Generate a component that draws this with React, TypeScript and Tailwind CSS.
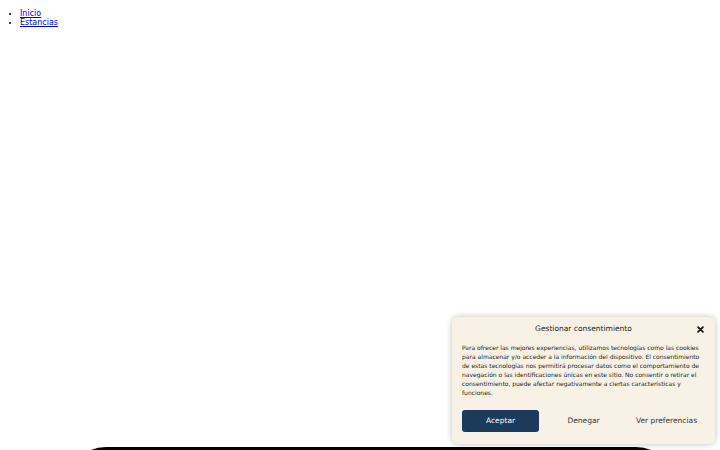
import React from "react";

export default function App() {
  return (
    <div className="relative w-[720px] h-[450px] overflow-hidden bg-white" style={{ fontFamily: '"DejaVu Sans", sans-serif' }}>
      <ul className="list-disc pl-[20px] mt-[9px] text-[8px] leading-[9.3px]">
        <li><a href="#" className="text-[#0000ee] underline">Inicio</a></li>
        <li><a href="#" className="text-[#0000ee] underline">Estancias</a></li>
      </ul>
      <div className="mt-[419px] ml-[66px] w-[610px] h-[40px] bg-black rounded-t-[40px]" />

      <div className="absolute left-[452px] top-[317px] w-[263px] h-[127px] bg-[#f8f2e6] rounded-[6px] shadow-[0_0_6px_rgba(0,0,0,0.25)] px-[10px] pt-[6px] text-[#222]">
        <div className="relative h-[12px] flex items-center justify-center">
          <span className="text-[7.5px] leading-[12px]">Gestionar consentimiento</span>
          <svg className="absolute right-[1px] top-[3px]" width="7" height="7" viewBox="0 0 10 10">
            <path d="M1.5 1.5 L8.5 8.5 M8.5 1.5 L1.5 8.5" stroke="#111" strokeWidth="2.4" strokeLinecap="round" />
          </svg>
        </div>
        <p className="mt-[7.5px] text-[6px] leading-[9px]">
          Para ofrecer las mejores experiencias, utilizamos tecnologías como las cookies para almacenar y/o acceder a la información del dispositivo. El consentimiento de estas tecnologías nos permitirá procesar datos como el comportamiento de navegación o las identificaciones únicas en este sitio. No consentir o retirar el consentimiento, puede afectar negativamente a ciertas características y funciones.
        </p>
        <div className="mt-[13.5px] grid grid-cols-3 gap-[6px]">
          <button className="h-[22px] rounded-[3px] bg-[#1b3a5c] text-white text-[7.5px]">Aceptar</button>
          <button className="h-[22px] rounded-[3px] text-[#333] text-[7.5px]">Denegar</button>
          <button className="h-[22px] rounded-[3px] text-[#333] text-[7.5px]">Ver preferencias</button>
        </div>
      </div>
    </div>
  );
}
